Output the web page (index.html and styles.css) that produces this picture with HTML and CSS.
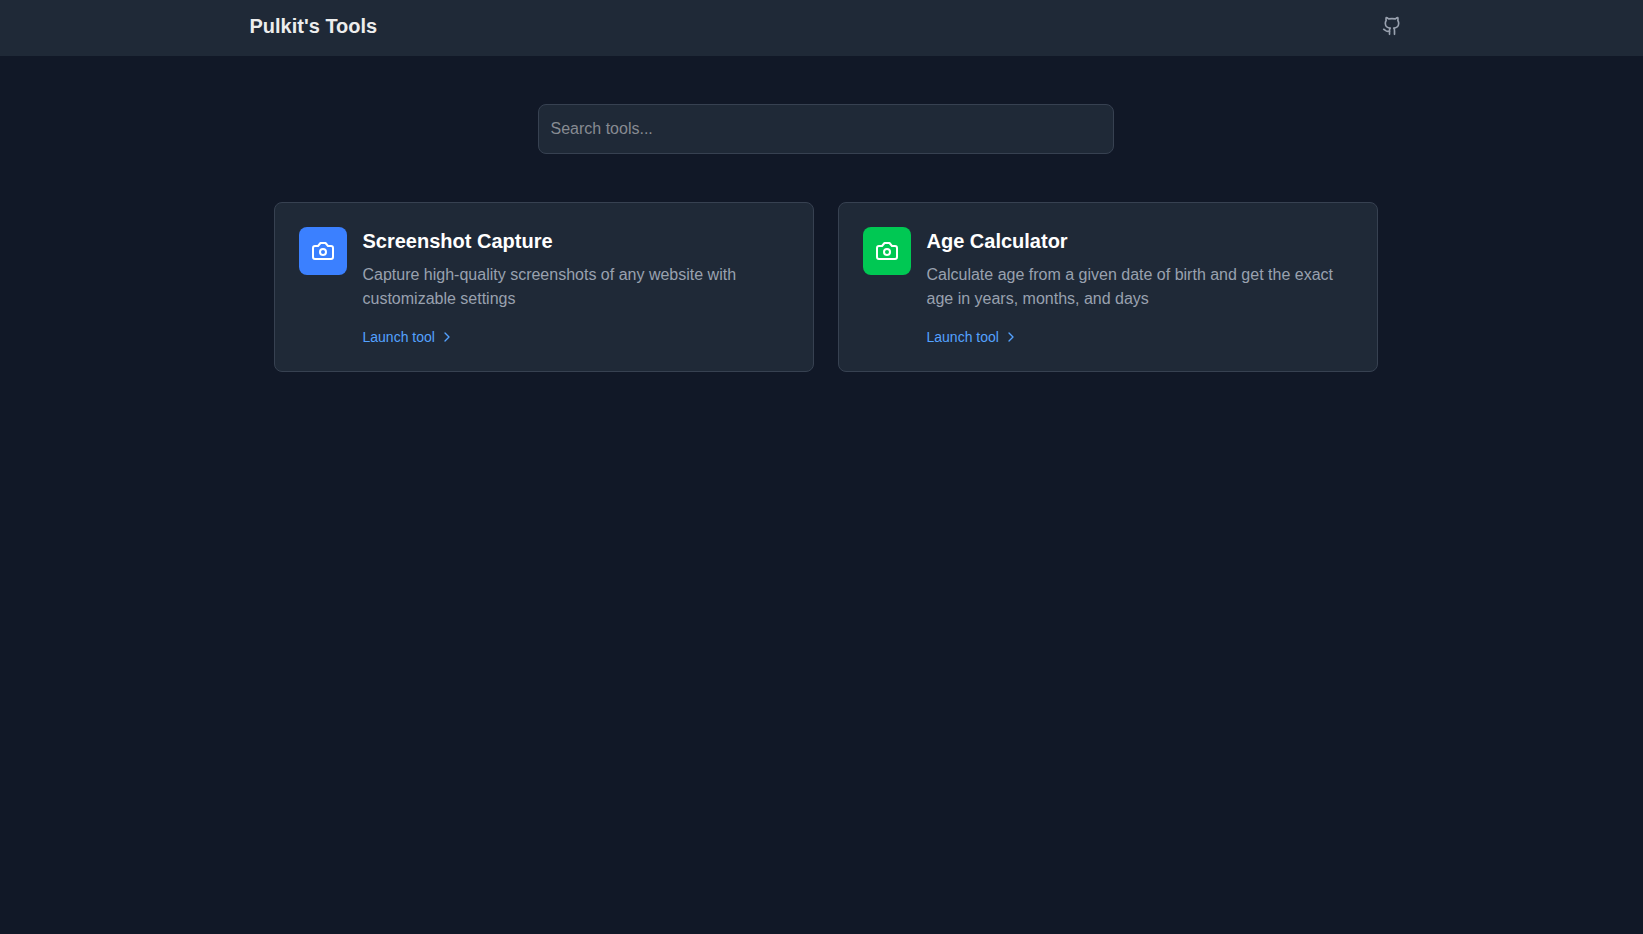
FILE: index.html
```html
<!DOCTYPE html>
<html lang="en">
<head>
<meta charset="utf-8">
<title>Pulkit's Tools</title>
<link rel="stylesheet" href="styles.css">
</head>
<body>
<header class="site-header">
  <div class="header-inner">
    <a class="brand">Pulkit's Tools</a>
    <a class="github" aria-label="GitHub">
      <svg class="icon" width="20" height="20" viewBox="0 0 24 24"><path d="M15 22v-4a4.8 4.8 0 0 0-1-3.5c3 0 6-2 6-5.5.08-1.25-.27-2.48-1-3.5.28-1.15.28-2.35 0-3.5 0 0-1 0-3 1.5-2.64-.5-5.36-.5-8 0C6 2 5 2 5 2c-.3 1.15-.3 2.35 0 3.5A5.403 5.403 0 0 0 4 9c0 3.5 3 5.5 6 5.5-.39.49-.68 1.05-.85 1.65-.17.6-.22 1.23-.15 1.85v4"/><path d="M9 18c-4.51 2-5-2-7-2"/></svg>
    </a>
  </div>
</header>
<main class="main">
  <div class="search"><input class="search-input" type="text" placeholder="Search tools..."></div>
  <div class="grid">
    <a class="card">
      <div class="badge badge-blue"><svg class="icon" width="24" height="24" viewBox="0 0 24 24"><path d="M14.5 4h-5L7 7H4a2 2 0 0 0-2 2v9a2 2 0 0 0 2 2h16a2 2 0 0 0 2-2V9a2 2 0 0 0-2-2h-3l-2.5-3z"/><circle cx="12" cy="13" r="3"/></svg></div>
      <div class="card-body">
        <h2 class="card-title">Screenshot Capture</h2>
        <p class="card-text">Capture high-quality screenshots of any website with customizable settings</p>
        <div class="launch">Launch tool <svg class="icon" width="16" height="16" viewBox="0 0 24 24"><path d="m9 18 6-6-6-6"/></svg></div>
      </div>
    </a>
    <a class="card">
      <div class="badge badge-green"><svg class="icon" width="24" height="24" viewBox="0 0 24 24"><path d="M14.5 4h-5L7 7H4a2 2 0 0 0-2 2v9a2 2 0 0 0 2 2h16a2 2 0 0 0 2-2V9a2 2 0 0 0-2-2h-3l-2.5-3z"/><circle cx="12" cy="13" r="3"/></svg></div>
      <div class="card-body">
        <h2 class="card-title">Age Calculator</h2>
        <p class="card-text">Calculate age from a given date of birth and get the exact age in years, months, and days</p>
        <div class="launch">Launch tool <svg class="icon" width="16" height="16" viewBox="0 0 24 24"><path d="m9 18 6-6-6-6"/></svg></div>
      </div>
    </a>
  </div>
</main>
</body>
</html>
```
FILE: styles.css
```css
*, *::before, *::after { box-sizing: border-box; margin: 0; padding: 0; }
body {
  min-height: 100vh;
  background: #111827;
  color: #ededed;
  font: 16px/24px "Liberation Sans", Arial, sans-serif;
}
.icon {
  display: block;
  fill: none;
  stroke: currentColor;
  stroke-width: 2;
  stroke-linecap: round;
  stroke-linejoin: round;
}
.site-header { padding-left: 8px; background: #1f2937; }
.header-inner {
  display: flex;
  align-items: center;
  justify-content: space-between;
  max-width: 1152px;
  height: 56px;
  margin: 0 auto;
  padding-bottom: 4px;
}
.brand { font-size: 20px; line-height: 28px; font-weight: 700; }
.github { color: #99a1af; }
.main { padding: 48px 24px 48px 32px; }
.search { max-width: 576px; margin: 0 auto 48px; }
.search-input {
  display: block;
  width: 100%;
  height: 50px;
  padding: 12px;
  border: 1px solid #374151;
  border-radius: 8px;
  background: #1f2937;
  color: inherit;
  font: inherit;
}
.search-input::placeholder { color: #878b92; opacity: 1; }
.grid { display: grid; grid-template-columns: 1fr 1fr; gap: 24px; max-width: 1104px; margin: 0 auto; }
.card {
  display: flex;
  align-items: flex-start;
  gap: 16px;
  padding: 24px;
  border: 1px solid #374151;
  border-radius: 8px;
  background: #1f2937;
}
.badge { flex: none; padding: 12px; border-radius: 8px; color: #fff; }
.badge-blue { background: #3b80ff; }
.badge-green { background: #00c853; }
.card-title { margin-bottom: 8px; color: #fff; font-size: 20px; line-height: 28px; font-weight: 600; }
.card-text { margin-bottom: 16px; color: #99a1af; }
.launch { display: flex; align-items: center; gap: 4px; color: #54a2ff; font-size: 14px; line-height: 20px; }
```
